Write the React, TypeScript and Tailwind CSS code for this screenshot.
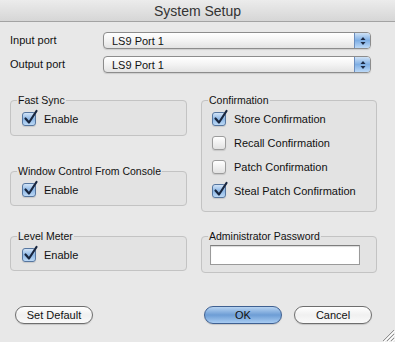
import type { ReactNode } from 'react'

function Check({ checked }: { checked: boolean }) {
  return (
    <span
      className={`relative inline-block h-[14px] w-[14px] shrink-0 rounded-[3px] border ${
        checked
          ? 'border-[#56769f] bg-linear-to-b from-[#d2e4f7] via-[#8db7e5] to-[#bcd8f5]'
          : 'border-[#9c9c9c] bg-linear-to-b from-white to-[#e2e2e2]'
      } shadow-[0_1px_1px_rgba(0,0,0,0.12)]`}
    >
      {checked && (
        <svg
          className="absolute left-[0px] top-[-3px] overflow-visible"
          width="15"
          height="15"
          viewBox="0 0 15 15"
        >
          <path d="M2.5 8.5 L6 12.5 L13.5 1" fill="none" stroke="#18263f" strokeWidth="2.2" strokeLinecap="round" strokeLinejoin="round" />
        </svg>
      )}
    </span>
  )
}

function CheckRow({ checked, label }: { checked: boolean; label: string }) {
  return (
    <div className="flex h-[14px] items-center gap-[8px]">
      <Check checked={checked} />
      <span className="text-[11px] leading-[14px]">{label}</span>
    </div>
  )
}

function Group({ title, className, children }: { title: string; className?: string; children: ReactNode }) {
  return (
    <fieldset className={`rounded-[4px] border border-[#c3c3c3] bg-[#e3e3e3] ${className ?? ''}`}>
      <legend className="ml-[6px] whitespace-nowrap px-[1px] text-[10.5px] leading-[14px]">{title}</legend>
      {children}
    </fieldset>
  )
}

function PopUp({ value }: { value: string }) {
  return (
    <div className="flex h-[17px] w-[268px] items-center overflow-hidden rounded-[4px] border border-[#8c8c8c] bg-linear-to-b from-white via-[#f3f3f3] to-[#e3e3e3] shadow-[0_1px_1px_rgba(0,0,0,0.12)]">
      <span className="pl-[8px] text-[11px] leading-[14px]">{value}</span>
      <span className="ml-auto flex h-full w-[16px] items-center justify-center border-l border-[#6b8dbd] bg-linear-to-b from-[#cfe2f6] via-[#7eaee4] to-[#bcd9f7]">
        <svg width="6" height="10" viewBox="0 0 6 10">
          <path d="M3 1 L5.5 4 L0.5 4 Z" fill="#1d2b45" />
          <path d="M0.5 6 L5.5 6 L3 9 Z" fill="#1d2b45" />
        </svg>
      </span>
    </div>
  )
}

function Button({ children, primary }: { children: ReactNode; primary?: boolean }) {
  return (
    <button
      className={`flex h-[18px] w-[78px] items-center justify-center rounded-full border text-[11px] leading-[14px] shadow-[0_1px_1px_rgba(0,0,0,0.15)] ${
        primary
          ? 'border-[#3f6091] bg-linear-to-b from-[#b7d3f1] via-[#6d9dd5] to-[#a8ccf2]'
          : 'border-[#6e6e6e] bg-linear-to-b from-white via-[#f0f0f0] to-[#fafafa]'
      }`}
    >
      {children}
    </button>
  )
}

export default function App() {
  return (
    <div
      className="relative h-[342px] w-[395px] overflow-hidden bg-[#e8e8e8] text-[#111]"
      style={{ fontFamily: '"Liberation Sans", Arial, sans-serif' }}
    >
      <div className="flex h-[22px] items-center justify-center border-b border-[#a3a3a3] bg-linear-to-b from-[#ececec] to-[#d6d6d6]">
        <span className="text-[14px] leading-[16px] text-[#333]">System Setup</span>
      </div>

      <div className="mt-[10px] flex flex-col gap-[7px] pl-[10px]">
        <div className="flex items-center">
          <span className="w-[93px] text-[11px]">Input port</span>
          <PopUp value="LS9 Port 1" />
        </div>
        <div className="flex items-center">
          <span className="w-[93px] text-[11px]">Output port</span>
          <PopUp value="LS9 Port 1" />
        </div>
      </div>

      <div className="mt-[20px] flex gap-[14px] pl-[10px]">
        <div className="flex w-[177px] flex-col">
          <Group title="Fast Sync" className="h-[43px]">
            <div className="px-[11px] pt-[5px]">
              <CheckRow checked label="Enable" />
            </div>
          </Group>
          <Group title="Window Control From Console" className="mt-[28px] h-[42px]">
            <div className="px-[11px] pt-[5px]">
              <CheckRow checked label="Enable" />
            </div>
          </Group>
          <Group title="Level Meter" className="mt-[23px] h-[42px]">
            <div className="px-[11px] pt-[5px]">
              <CheckRow checked label="Enable" />
            </div>
          </Group>
        </div>
        <div className="flex w-[176px] flex-col">
          <Group title="Confirmation" className="h-[119px]">
            <div className="flex flex-col gap-[10px] px-[10px] pt-[5px]">
              <CheckRow checked label="Store Confirmation" />
              <CheckRow checked={false} label="Recall Confirmation" />
              <CheckRow checked={false} label="Patch Confirmation" />
              <CheckRow checked label="Steal Patch Confirmation" />
            </div>
          </Group>
          <Group title="Administrator Password" className="mt-[17px] h-[44px]">
            <div className="px-[8px] pt-[2px]">
              <div className="h-[20px] w-[150px] border border-[#9a9a9a] border-t-[#7d7d7d] bg-white shadow-[inset_0_1px_1px_rgba(0,0,0,0.15)]" />
            </div>
          </Group>
        </div>
      </div>

      <div className="mt-[33px] flex items-center justify-between pl-[15px] pr-[23px]">
        <Button>Set Default</Button>
        <div className="flex gap-[12px]">
          <Button primary>OK</Button>
          <Button>Cancel</Button>
        </div>
      </div>

      <svg className="absolute bottom-0 right-0" width="14" height="14" viewBox="0 0 14 14">
        <path d="M13 2 L2 13 M13 6 L6 13 M13 10 L10 13" stroke="#8f8f8f" strokeWidth="1" />
        <path d="M14 3 L3 14 M14 7 L7 14 M14 11 L11 14" stroke="#ffffff" strokeWidth="1" />
      </svg>
    </div>
  )
}
